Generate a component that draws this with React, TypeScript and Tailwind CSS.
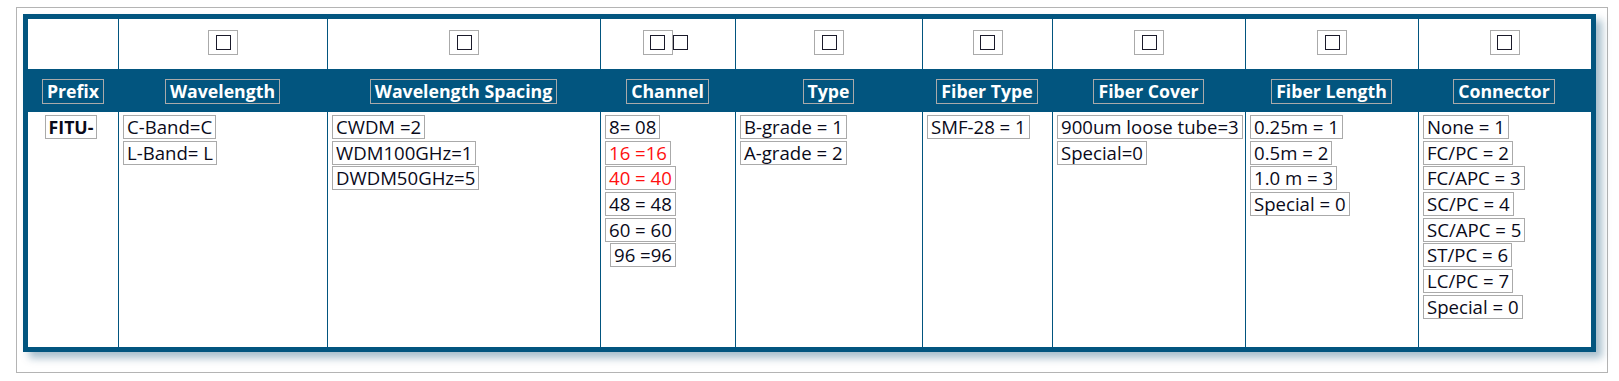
import React from 'react';

const cols = 'grid grid-cols-[90px_209px_273px_135px_187px_130px_193px_173px_172px]';

const headers = [
  'Prefix',
  'Wavelength',
  'Wavelength Spacing',
  'Channel',
  'Type',
  'Fiber Type',
  'Fiber Cover',
  'Fiber Length',
  'Connector',
];

type Item = { text: string; red?: boolean; indent?: boolean };

const body: Item[][] = [
  [],
  [{ text: 'C-Band=C' }, { text: 'L-Band= L' }],
  [{ text: 'CWDM =2' }, { text: 'WDM100GHz=1' }, { text: 'DWDM50GHz=5' }],
  [
    { text: '8= 08' },
    { text: '16 =16', red: true },
    { text: '40 = 40', red: true },
    { text: '48 = 48' },
    { text: '60 = 60' },
    { text: '96 =96', indent: true },
  ],
  [{ text: 'B-grade = 1' }, { text: 'A-grade = 2' }],
  [{ text: 'SMF-28 = 1' }],
  [{ text: '900um loose tube=3' }, { text: 'Special=0' }],
  [{ text: '0.25m = 1' }, { text: '0.5m = 2' }, { text: '1.0 m = 3' }, { text: 'Special = 0' }],
  [
    { text: 'None = 1' },
    { text: 'FC/PC = 2' },
    { text: 'FC/APC = 3' },
    { text: 'SC/PC = 4' },
    { text: 'SC/APC = 5' },
    { text: 'ST/PC = 6' },
    { text: 'LC/PC = 7' },
    { text: 'Special = 0' },
  ],
];

const Square = () => <span className="block w-[15px] h-[15px] border border-[#1a1a2a]" />;

const CheckBox = () => (
  <span className="flex items-center justify-center w-[30px] h-[25px] border border-[#aaaaaa]">
    <Square />
  </span>
);

const Cell = ({ item }: { item: Item }) => (
  <span
    className={`self-start h-[24px] px-[3px] border border-[#aaaaaa] leading-[22px] whitespace-pre ${
      item.red ? 'text-[#ff1010]' : 'text-[#0a0a1a]'
    } ${item.indent ? 'ml-[5px]' : ''}`}
  >
    {item.text}
  </span>
);

export default function App() {
  return (
    <div className="bg-white w-[1619px] h-[381px] pt-[7px] pl-[16px] font-['Open_Sans',sans-serif]">
      <div className="w-[1592px] h-[366px] border border-[#b4b4b4] pt-[6px] pl-[6px]">
        <div className="w-[1573px] border-[5px] border-[#02557f] bg-white shadow-[6px_6px_8px_rgba(0,70,110,0.35)]">
          {/* checkbox row */}
          <div className={`${cols} h-[50px]`}>
            {headers.map((h, i) => (
              <div
                key={h}
                className={`flex items-center justify-center pb-[3px] ${i > 0 ? 'border-l border-[#02557f]' : ''}`}
              >
                {i === 0 ? null : i === 3 ? (
                  <span className="flex items-center ml-[-6px]">
                    <CheckBox />
                    <Square />
                  </span>
                ) : (
                  <CheckBox />
                )}
              </div>
            ))}
          </div>

          {/* header row */}
          <div className={`${cols} h-[43px] bg-[#02557f]`}>
            {headers.map((h) => (
              <div key={h} className="flex items-center justify-center pt-[2px]">
                <span className="h-[25px] px-[4px] border border-[#aaaaaa] text-white font-bold text-[17.7px] leading-[23px] whitespace-nowrap">
                  {h}
                </span>
              </div>
            ))}
          </div>

          {/* body row */}
          <div className={`${cols} h-[235px]`}>
            {body.map((items, i) => (
              <div
                key={i}
                className={`flex flex-col gap-[1.7px] pt-[3px] text-[18.6px] ${
                  i > 0 ? 'border-l border-[#02557f] pl-[4px]' : 'items-center pr-[4px]'
                }`}
              >
                {i === 0 ? (
                  <span className="self-center h-[24px] px-[3px] border border-[#aaaaaa] font-bold text-[17.7px] leading-[22px] text-[#0a0a1a]">
                    FITU-
                  </span>
                ) : (
                  items.map((it) => <Cell key={it.text} item={it} />)
                )}
              </div>
            ))}
          </div>
        </div>
      </div>
    </div>
  );
}
